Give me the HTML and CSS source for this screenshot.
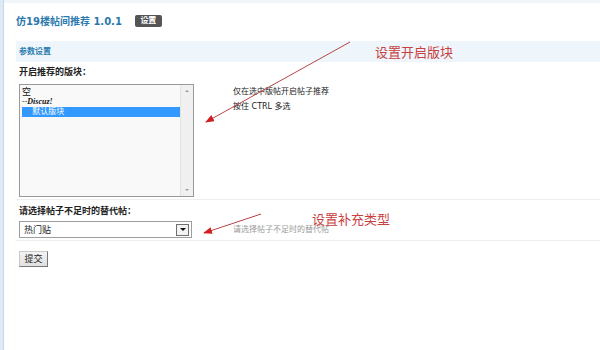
FILE: index.html
```html
<!DOCTYPE html>
<html lang="zh-CN">
<head>
    <meta charset="UTF-8">
    <title>仿19楼帖间推荐 1.0.1</title>
    <link rel="stylesheet" href="styles.css">
</head>
<body>
<div class="page">
    <div class="topstrip"></div>
    <div class="head">
        <h1 class="title">仿19楼帖间推荐 1.0.1</h1>
        <span class="badge">设置</span>
    </div>
    <div class="bar">参数设置</div>

    <div class="row">
        <div class="label">开启推荐的版块：</div>
        <div class="field">
            <div class="listbox">
                <div class="options">
                    <div class="opt">空</div>
                    <div class="opt grp">--Discuz!</div>
                    <div class="opt sel">&nbsp;&nbsp;&nbsp;&nbsp;默认版块</div>
                </div>
                <div class="scroll">
                    <span class="arrow up"></span>
                    <span class="arrow down"></span>
                </div>
            </div>
            <div class="tip">仅在选中版帖开启帖子推荐<br>按住 CTRL 多选</div>
        </div>
    </div>

    <div class="row">
        <div class="label">请选择帖子不足时的替代帖：</div>
        <div class="field">
            <div class="select">
                <span>热门贴</span>
                <span class="dropbtn"><span class="tri"></span></span>
            </div>
            <div class="hint">请选择帖子不足时的替代帖</div>
        </div>
    </div>

    <div class="actions">
        <button class="submit" type="button">提交</button>
    </div>

    <!-- annotations drawn over the screenshot -->
    <svg class="notes" width="600" height="350" viewBox="0 0 600 350">
        <defs>
            <marker id="head" markerWidth="9" markerHeight="7" refX="8" refY="3.5" orient="auto" markerUnits="userSpaceOnUse">
                <polygon points="0,0 9,3.5 0,7" fill="#d21e1e"/>
            </marker>
        </defs>
        <line x1="350" y1="42" x2="206" y2="122" stroke="#b8454a" stroke-width="1" marker-end="url(#head)"/>
        <line x1="261" y1="214" x2="204" y2="233" stroke="#b8454a" stroke-width="1" marker-end="url(#head)"/>
    </svg>
    <div class="note note-top">设置开启版块</div>
    <div class="note note-mid">设置补充类型</div>
</div>
</body>
</html>
```

FILE: styles.css
```css
html, body {
    margin: 0;
    padding: 0;
}

body {
    background-color: #dde9f5;
    padding-left: 3px;
    font-family: "DejaVu Sans", "Noto Sans CJK SC", sans-serif;
    color: #222;
}

.page {
    position: relative;
    background-color: #fff;
    border-left: 1px solid #c6d9eb;
    min-height: 350px;
    padding-left: 12px;
}

.topstrip {
    height: 3px;
    margin-left: -12px;
    background-color: #f1f6fb;
}

.head {
    display: flex;
    align-items: center;
    height: 38px;
    padding-bottom: 3px;
    box-sizing: border-box;
}

.title {
    margin: 0;
    font-size: 10px;
    font-weight: bold;
    color: #2a78ad;
}

.badge {
    margin-left: 13px;
    width: 27px;
    height: 12px;
    line-height: 12px;
    text-align: center;
    background-color: #555;
    border-radius: 2px;
    color: #fff;
    font-size: 8px;
    font-weight: bold;
}

.bar {
    height: 21px;
    line-height: 22px;
    padding-left: 3px;
    background-color: #eef5fb;
    color: #2a7cb0;
    font-size: 8px;
    font-weight: bold;
}

.row {
    padding-left: 3px;
    padding-bottom: 2px;
    border-bottom: 1px solid #eee;
}

.label {
    height: 12px;
    line-height: 12px;
    margin: 4px 0 6px;
    font-size: 9px;
    font-weight: bold;
    color: #222;
}

.row + .row .label {
    margin: 5px 0 4px;
}

.field {
    display: flex;
    gap: 39px;
}

.listbox {
    display: flex;
    width: 175px;
    height: 113px;
    box-sizing: border-box;
    border: 1px solid #9a9a9a;
    background-color: #f9f9f9;
}

.options {
    flex: 1;
    padding: 2px 0 0 2px;
}

.opt {
    height: 10px;
    line-height: 10px;
    font-size: 9px;
    color: #111;
}

.grp {
    font-family: "Liberation Serif", serif;
    font-size: 8px;
    font-weight: bold;
    font-style: italic;
}

.sel {
    background-color: #3399ff;
    color: #fff;
    font-size: 8px;
}

.scroll {
    width: 12px;
    display: flex;
    flex-direction: column;
    justify-content: space-between;
    align-items: center;
    padding: 5px 0;
    background-color: #f0f0f0;
    border-left: 1px solid #e2e2e2;
}

.arrow {
    width: 0;
    height: 0;
    border-left: 2px solid transparent;
    border-right: 2px solid transparent;
}

.up {
    border-bottom: 2px solid #999;
}

.down {
    border-top: 2px solid #999;
}

.tip {
    font-size: 8px;
    line-height: 15px;
    color: #222;
}

.select {
    display: flex;
    align-items: center;
    justify-content: space-between;
    width: 173px;
    height: 17px;
    box-sizing: border-box;
    border: 1px solid #9e9e9e;
    padding: 0 2px 0 4px;
    font-size: 9px;
    background-color: #fff;
}

.dropbtn {
    display: flex;
    align-items: center;
    justify-content: center;
    width: 11px;
    height: 10px;
    border: 1px solid #6f6f6f;
    background-color: #f2f2f2;
}

.tri {
    width: 0;
    height: 0;
    border-left: 3px solid transparent;
    border-right: 3px solid transparent;
    border-top: 3px solid #111;
}

.hint {
    margin-left: 2px;
    line-height: 17px;
    font-size: 8px;
    color: #999;
}

.actions {
    padding: 6px 0 0 3px;
}

.submit {
    width: 29px;
    height: 16px;
    padding: 0;
    font-family: "Noto Sans CJK SC", sans-serif;
    font-size: 9px;
    color: #222;
    background: linear-gradient(#f4f4f4, #e0e0e0);
    border: 1px solid;
    border-color: #c8c8c8 #777 #777 #c8c8c8;
}

.notes {
    position: absolute;
    left: -4px;
    top: 0;
    pointer-events: none;
}

.note {
    position: absolute;
    font-family: "Noto Sans CJK SC", sans-serif;
    font-size: 13px;
    line-height: 14px;
    color: #c9403f;
}

.note-top {
    left: 371px;
    top: 45px;
}

.note-mid {
    left: 308px;
    top: 212px;
}
```
